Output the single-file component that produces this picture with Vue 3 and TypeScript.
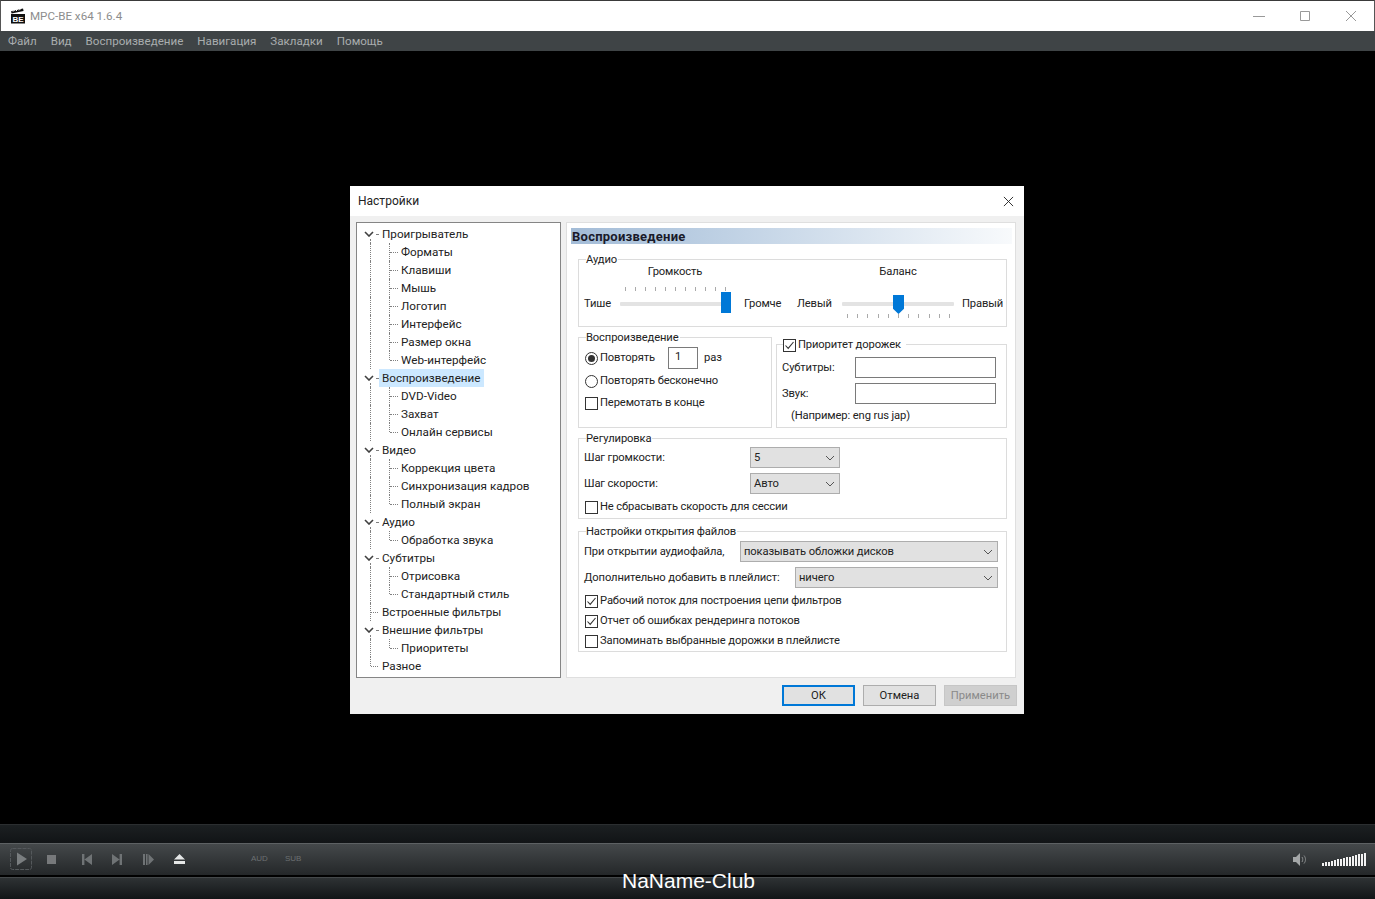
<script setup lang="ts">
type TreeRow = {
  label: string
  level: 0 | 1
  expander?: boolean
  lastChild?: boolean
  selected?: boolean
  lastRoot?: boolean
}

const menu = ['Файл', 'Вид', 'Воспроизведение', 'Навигация', 'Закладки', 'Помощь']

const tree: TreeRow[] = [
  { label: 'Проигрыватель', level: 0, expander: true },
  { label: 'Форматы', level: 1 },
  { label: 'Клавиши', level: 1 },
  { label: 'Мышь', level: 1 },
  { label: 'Логотип', level: 1 },
  { label: 'Интерфейс', level: 1 },
  { label: 'Размер окна', level: 1 },
  { label: 'Web-интерфейс', level: 1, lastChild: true },
  { label: 'Воспроизведение', level: 0, expander: true, selected: true },
  { label: 'DVD-Video', level: 1 },
  { label: 'Захват', level: 1 },
  { label: 'Онлайн сервисы', level: 1, lastChild: true },
  { label: 'Видео', level: 0, expander: true },
  { label: 'Коррекция цвета', level: 1 },
  { label: 'Синхронизация кадров', level: 1 },
  { label: 'Полный экран', level: 1, lastChild: true },
  { label: 'Аудио', level: 0, expander: true },
  { label: 'Обработка звука', level: 1, lastChild: true },
  { label: 'Субтитры', level: 0, expander: true },
  { label: 'Отрисовка', level: 1 },
  { label: 'Стандартный стиль', level: 1, lastChild: true },
  { label: 'Встроенные фильтры', level: 0 },
  { label: 'Внешние фильтры', level: 0, expander: true },
  { label: 'Приоритеты', level: 1, lastChild: true },
  { label: 'Разное', level: 0, lastRoot: true }
]

const ticks = Array.from({ length: 11 }, (_, i) => i)
const volumeBars = Array.from({ length: 15 }, (_, i) => ({
  x: i * 3,
  height: 3 + Math.round(i * 0.72)
}))
</script>

<template>
  <div class="player">
    <header class="titlebar">
      <svg class="titlebar__icon" viewBox="0 0 16 16" aria-hidden="true">
        <path d="M1 3.2 13 .6l.6 2.4L1.6 5.600Z" fill="#111" />
        <path d="M3 3.600 4.600 2M6 3 7.600 1.400M9 2.400l1.600-1.600" stroke="#fff" stroke-width="1" />
        <rect x="1" y="6" width="14" height="9.500" fill="#111" />
        <text x="8" y="14" text-anchor="middle" class="titlebar__icon-text">BE</text>
      </svg>
      <span class="titlebar__text">MPC-BE x64 1.6.4</span>
      <div class="titlebar__buttons">
        <svg viewBox="0 0 12 12" aria-hidden="true"><path d="M0 6.500h12" /></svg>
        <svg viewBox="0 0 12 12" aria-hidden="true"><path d="M1.500 1.500h9v9h-9Z" /></svg>
        <svg viewBox="0 0 12 12" aria-hidden="true"><path d="M1 1l10 10M11 1 1 11" /></svg>
      </div>
    </header>

    <nav class="menubar">
      <span v-for="item in menu" :key="item">{{ item }}</span>
    </nav>

    <main class="video">
      <section class="dialog" aria-label="Настройки">
        <div class="dialog__head">
          <span>Настройки</span>
          <svg viewBox="0 0 12 12" aria-hidden="true"><path d="M1 1l10 10M11 1 1 11" /></svg>
        </div>

        <div class="dialog__body">
          <div class="tree">
            <div v-for="row in tree" :key="row.label" class="tree__row">
              <i v-if="!row.lastRoot" class="tree__line tree__line--root" :class="{ 'tree__line--below': row.expander }" />
              <i v-else class="tree__line tree__line--root tree__line--half" />
              <template v-if="row.level === 1">
                <i class="tree__line tree__line--child" :class="{ 'tree__line--half': row.lastChild }" />
                <i class="tree__tick tree__tick--child" />
              </template>
              <i v-else class="tree__tick tree__tick--root" :class="{ 'tree__tick--short': row.expander }" />
              <svg v-if="row.expander" class="tree__chevron" viewBox="0 0 10 6" aria-hidden="true">
                <path d="M1 1l4 4 4-4" />
              </svg>
              <span
                class="tree__label"
                :class="{ 'tree__label--child': row.level === 1, 'tree__label--selected': row.selected }"
              >{{ row.label }}</span>
            </div>
          </div>

          <div class="panel">
            <h2 class="panel__title">Воспроизведение</h2>

            <div class="group group--audio">
              <span class="group__legend">Аудио</span>
              <div class="slider slider--volume">
                <span class="slider__caption">Громкость</span>
                <span>Тише</span>
                <div class="slider__rail">
                  <div class="slider__ticks slider__ticks--top"><i v-for="t in ticks" :key="t" /></div>
                  <div class="slider__thumb slider__thumb--end" />
                </div>
                <span>Громче</span>
              </div>
              <div class="slider slider--balance">
                <span class="slider__caption">Баланс</span>
                <span>Левый</span>
                <div class="slider__rail">
                  <div class="slider__ticks slider__ticks--bottom"><i v-for="t in ticks" :key="t" /></div>
                  <div class="slider__thumb slider__thumb--mid" />
                </div>
                <span>Правый</span>
              </div>
            </div>

            <div class="panel__pair">
              <div class="group group--repeat">
                <span class="group__legend">Воспроизведение</span>
                <div class="check-row check-row--tall">
                  <i class="radio radio--on" />
                  <span class="repeat-label">Повторять</span>
                  <span class="field field--count">1</span>
                  <span class="repeat-unit">раз</span>
                </div>
                <div class="check-row check-row--tall check-row--next">
                  <i class="radio" />
                  <span>Повторять бесконечно</span>
                </div>
                <div class="check-row check-row--tall">
                  <i class="check" />
                  <span>Перемотать в конце</span>
                </div>
              </div>

              <div class="group group--priority">
                <span class="group__legend group__legend--check">
                  <i class="check check--on">
                    <svg viewBox="0 0 13 13" aria-hidden="true"><path d="M2.500 6.500 5.200 9.400 10.500 3" /></svg>
                  </i>
                  Приоритет дорожек
                </span>
                <div class="priority-grid">
                  <span>Субтитры:</span>
                  <span class="field" />
                  <span>Звук:</span>
                  <span class="field" />
                </div>
                <p class="priority-note">(Например: eng rus jap)</p>
              </div>
            </div>

            <div class="group group--adjust">
              <span class="group__legend">Регулировка</span>
              <div class="combo-row">
                <span class="combo-row__label combo-row__label--adjust">Шаг громкости:</span>
                <div class="combo combo--small">
                  5
                  <svg viewBox="0 0 10 6" aria-hidden="true"><path d="M1 1l4 4 4-4" /></svg>
                </div>
              </div>
              <div class="combo-row">
                <span class="combo-row__label combo-row__label--adjust">Шаг скорости:</span>
                <div class="combo combo--small">
                  Авто
                  <svg viewBox="0 0 10 6" aria-hidden="true"><path d="M1 1l4 4 4-4" /></svg>
                </div>
              </div>
              <div class="check-row check-row--adjust">
                <i class="check" />
                <span>Не сбрасывать скорость для сессии</span>
              </div>
            </div>

            <div class="group group--files">
              <span class="group__legend">Настройки открытия файлов</span>
              <div class="combo-row">
                <span class="combo-row__label combo-row__label--audio">При открытии аудиофайла,</span>
                <div class="combo">
                  показывать обложки дисков
                  <svg viewBox="0 0 10 6" aria-hidden="true"><path d="M1 1l4 4 4-4" /></svg>
                </div>
              </div>
              <div class="combo-row">
                <span class="combo-row__label combo-row__label--playlist">Дополнительно добавить в плейлист:</span>
                <div class="combo">
                  ничего
                  <svg viewBox="0 0 10 6" aria-hidden="true"><path d="M1 1l4 4 4-4" /></svg>
                </div>
              </div>
              <div class="file-checks">
                <div class="check-row">
                  <i class="check check--on">
                    <svg viewBox="0 0 13 13" aria-hidden="true"><path d="M2.500 6.500 5.200 9.400 10.500 3" /></svg>
                  </i>
                  <span>Рабочий поток для построения цепи фильтров</span>
                </div>
                <div class="check-row">
                  <i class="check check--on">
                    <svg viewBox="0 0 13 13" aria-hidden="true"><path d="M2.500 6.500 5.200 9.400 10.500 3" /></svg>
                  </i>
                  <span>Отчет об ошибках рендеринга потоков</span>
                </div>
                <div class="check-row">
                  <i class="check" />
                  <span>Запоминать выбранные дорожки в плейлисте</span>
                </div>
              </div>
            </div>
          </div>
        </div>

        <footer class="dialog__foot">
          <button type="button" class="btn btn--primary">ОК</button>
          <button type="button" class="btn">Отмена</button>
          <button type="button" class="btn" disabled>Применить</button>
        </footer>
      </section>
    </main>

    <div class="seekbar" />

    <div class="controls">
      <svg class="ctl ctl--play" viewBox="0 0 22 22" aria-hidden="true">
        <rect x=".5" y=".5" width="21" height="21" rx="2" fill="none" stroke="#55595c" stroke-dasharray="4 1" />
        <path d="M7 4.500 17 11 7 17.500Z" fill="#7a7e80" />
      </svg>
      <svg class="ctl ctl--stop" viewBox="0 0 9 9" aria-hidden="true"><rect width="9" height="9" fill="#77797b" /></svg>
      <svg class="ctl ctl--prev" viewBox="0 0 10 11" aria-hidden="true"><path d="M0 0h2.400v11H0ZM10 0v11L2.400 5.500Z" fill="#6f7375" /></svg>
      <svg class="ctl ctl--next" viewBox="0 0 10 11" aria-hidden="true"><path d="M10 0H7.600v11H10ZM0 0v11l7.600-5.500Z" fill="#6f7375" /></svg>
      <svg class="ctl ctl--step" viewBox="0 0 11 11" aria-hidden="true"><path d="M0 0h2v11H0ZM3 0h1.600v11H3ZM5.500 0v11L11 5.500Z" fill="#6f7375" /></svg>
      <svg class="ctl ctl--eject" viewBox="0 0 11 10" aria-hidden="true"><path d="M5.500 0 11 5.500H0ZM0 7h11v3H0Z" fill="#e4e6e6" /></svg>
      <span class="ctl-text ctl-text--aud">AUD</span>
      <span class="ctl-text ctl-text--sub">SUB</span>
      <svg class="ctl ctl--speaker" viewBox="0 0 15 13" aria-hidden="true">
        <path d="M0 4h3l4-4v13L3 9H0Z" fill="#a4a7a8" />
        <path d="M9 4c1 1.500 1 3.500 0 5M11 2.500c2 2.500 2 5.500 0 8" fill="none" stroke="#8c8f90" />
      </svg>
      <svg class="ctl ctl--volume" viewBox="0 0 45 13" aria-hidden="true">
        <rect
          v-for="bar in volumeBars"
          :key="bar.x"
          :x="bar.x"
          :y="13 - bar.height"
          width="2"
          :height="bar.height"
          fill="#f2f2f2"
        />
      </svg>
    </div>

    <div class="statusbar" />
    <span class="watermark">NaName-Club</span>
  </div>
</template>

<style>
html,
body {
  margin: 0;
  background: #000;
}
</style>

<style scoped>
.player {
  position: relative;
  display: flex;
  flex-direction: column;
  width: 1375px;
  height: 899px;
  overflow: hidden;
  font-family: Roboto, 'Noto Sans', sans-serif;
  font-size: 12px;
  line-height: 16px;
  color: #222;
}

.titlebar {
  display: flex;
  align-items: center;
  flex: 0 0 31px;
  box-sizing: border-box;
  padding: 0 17px 0 10px;
  background: #fff;
  border-top: 1px solid #3a3a3a;
  border-left: 1px solid #555;
  border-right: 1px solid #555;
}

.titlebar__icon {
  width: 16px;
  height: 16px;
  margin-left: -1px;
}

.titlebar__icon-text {
  font-family: 'Liberation Sans', sans-serif;
  font-size: 8px;
  font-weight: 700;
  fill: #fff;
}

.titlebar__text {
  margin-left: 4px;
  font-size: 11.6px;
  color: #8d8d8d;
}

.titlebar__buttons {
  display: flex;
  gap: 34px;
  margin-left: auto;
}

.titlebar__buttons svg {
  width: 12px;
  height: 12px;
  fill: none;
  stroke: #999;
}

.menubar {
  display: flex;
  align-items: center;
  gap: 14px;
  flex: 0 0 20px;
  padding-left: 8px;
  font-size: 11.6px;
  background: #3f4446;
  color: #a9adae;
}

.video {
  position: relative;
  flex: 1;
  background: #000;
}

.dialog {
  position: absolute;
  top: 135px;
  left: 350px;
  display: flex;
  flex-direction: column;
  width: 674px;
  height: 528px;
  background: #f0f0f0;
}

.dialog__head {
  display: flex;
  align-items: center;
  justify-content: space-between;
  flex: 0 0 30px;
  padding: 0 10px 0 8px;
  background: #fff;
}

.dialog__head svg {
  width: 11px;
  height: 11px;
  fill: none;
  stroke: #222;
}

.dialog__body {
  display: flex;
  gap: 5px;
  flex: 0 0 456px;
  margin-top: 6px;
  padding: 0 8px 0 6px;
}

.tree {
  flex: 0 0 205px;
  box-sizing: border-box;
  padding-top: 2px;
  font-size: 11.7px;
  background: #fff;
  border: 1px solid #858585;
}

.tree__row {
  position: relative;
  display: flex;
  align-items: center;
  height: 18px;
}

.tree__line {
  position: absolute;
  top: 0;
  bottom: 0;
  border-left: 1px dotted #808080;
}

.tree__line--root {
  left: 13px;
}

.tree__line--child {
  left: 32px;
}

.tree__line--half {
  bottom: 9px;
}

.tree__line--below {
  top: 14px;
}

.tree__tick {
  position: absolute;
  top: 9px;
  border-top: 1px dotted #808080;
}

.tree__tick--root {
  left: 14px;
  width: 7px;
}

.tree__tick--short {
  left: 19px;
  width: 2px;
}

.tree__tick--child {
  left: 33px;
  width: 8px;
}

.tree__chevron {
  position: absolute;
  top: 6px;
  left: 7px;
  width: 10px;
  height: 6px;
  fill: none;
  stroke: #404040;
  stroke-width: 1.6;
}

.tree__label {
  margin-left: 22px;
  padding: 0 3px;
  height: 18px;
  line-height: 18px;
}

.tree__label--child {
  margin-left: 41px;
}

.tree__label--selected {
  background: #cce8ff;
}

.panel {
  display: flex;
  flex-direction: column;
  flex: 0 0 450px;
  box-sizing: border-box;
  padding: 5px 3px 0 4px;
  font-size: 11.2px;
  letter-spacing: -0.12px;
  background: #fff;
  border: 1px solid #dfdfdf;
}

.panel__title {
  height: 16px;
  margin: 0;
  padding-left: 1px;
  font-size: 13px;
  font-weight: 700;
  line-height: 17px;
  letter-spacing: 0.25px;
  color: #1a1a2a;
  background: linear-gradient(90deg, #a3bcd7 0%, #c3d4e6 40%, #f8fafc 100%);
}

.group {
  position: relative;
  box-sizing: border-box;
  margin-left: 7px;
  width: 429px;
  background: #fff;
  border: 1px solid #dcdcdc;
}

.group__legend {
  position: absolute;
  top: -8px;
  left: 7px;
  padding: 0 1px 0 0;
  background: #fff;
}

.group__legend--check {
  top: -8px;
  left: 6px;
  display: flex;
  align-items: center;
  gap: 2px;
  padding-right: 5px;
}

.group--audio {
  display: flex;
  gap: 17px;
  height: 68px;
  margin-top: 15px;
  padding: 4px 0 0 5px;
}

.slider {
  display: grid;
  grid-template-rows: 16px 24px;
  row-gap: 12px;
  align-items: center;
  white-space: nowrap;
}

.slider > span,
.slider > div {
  grid-row: 2;
}

.slider > .slider__caption {
  grid-row: 1;
  grid-column: 2;
  text-align: center;
}

.slider--volume {
  grid-template-columns: 36px 110px 50px;
  width: 196px;
}

.slider--volume > span:last-child {
  margin-left: 14px;
}

.slider--balance {
  grid-template-columns: 45px 112px auto;
  width: 205px;
}

.slider--balance > span:last-child {
  margin-left: 8px;
}

.slider__rail {
  position: relative;
  height: 4px;
  background: #e3e3e3;
  border-radius: 1px;
}

.slider__ticks {
  position: absolute;
  right: 4px;
  left: 5px;
  display: flex;
  justify-content: space-between;
}

.slider__ticks i {
  width: 1px;
  height: 4px;
  background: #aaa;
}

.slider__ticks--top {
  top: -15px;
}

.slider__ticks--bottom {
  top: 12px;
}

.slider__thumb {
  position: absolute;
  background: #0078d7;
}

.slider__thumb--end {
  top: -10px;
  right: -1px;
  width: 10px;
  height: 21px;
}

.slider__thumb--mid {
  top: -7px;
  left: 51px;
  width: 11px;
  height: 19px;
  clip-path: polygon(0 0, 100% 0, 100% 72%, 50% 100%, 0 72%);
}

.panel__pair {
  display: flex;
  align-items: flex-end;
  gap: 4px;
  margin: 10px 0 0 7px;
}

.panel__pair .group {
  margin-left: 0;
}

.group--repeat {
  width: 194px;
  height: 91px;
  padding: 9px 0 0 6px;
}

.group--priority {
  width: 231px;
  height: 84px;
  padding: 12px 0 0 5px;
}

.check-row {
  display: flex;
  align-items: center;
  gap: 2px;
  height: 20px;
  white-space: nowrap;
}

.check-row--tall {
  height: 22px;
}

.check-row--next {
  margin-top: 1px;
}

.check-row--adjust {
  height: 16px;
  margin: 5px 0 0 1px;
}

.radio,
.check {
  display: block;
  flex: none;
  box-sizing: border-box;
  width: 13px;
  height: 13px;
  background: #fff;
  border: 1px solid #333;
}

.radio {
  position: relative;
  border-radius: 50%;
}

.radio--on::after {
  content: '';
  position: absolute;
  top: 2px;
  left: 2px;
  width: 7px;
  height: 7px;
  border-radius: 50%;
  background: #333;
}

.check svg {
  display: block;
  width: 13px;
  height: 13px;
  margin: -1px;
  fill: none;
  stroke: #333;
  stroke-width: 1.1;
}

.repeat-label {
  width: 66px;
}

.repeat-unit {
  margin-left: 4px;
}

.field {
  display: block;
  box-sizing: border-box;
  height: 21px;
  background: #fff;
  border: 1px solid #7a7a7a;
}

.field--count {
  width: 30px;
  height: 22px;
  padding: 1px 0 0 6px;
}

.priority-grid {
  display: grid;
  grid-template-columns: 73px 141px;
  row-gap: 5px;
  align-items: center;
}

.priority-note {
  margin: 4px 0 0 9px;
}

.group--adjust {
  height: 81px;
  margin-top: 10px;
  padding: 8px 0 0 5px;
}

.group--files {
  height: 121px;
  margin-top: 12px;
  padding: 9px 8px 0 5px;
}

.combo-row {
  display: flex;
  align-items: center;
  height: 21px;
  margin-bottom: 5px;
  white-space: nowrap;
}

.combo-row__label--adjust {
  flex: 0 0 166px;
}

.combo-row__label--audio {
  flex: 0 0 156px;
}

.combo-row__label--playlist {
  flex: 0 0 211px;
}

.combo {
  display: flex;
  align-items: center;
  justify-content: space-between;
  flex: 1;
  box-sizing: border-box;
  height: 21px;
  padding: 0 4px 0 3px;
  background: #e1e1e1;
  border: 1px solid #adadad;
}

.combo--small {
  flex: 0 0 90px;
}

.combo svg {
  width: 10px;
  height: 6px;
  fill: none;
  stroke: #555;
}

.file-checks {
  margin: -2px 0 0 1px;
}

.dialog__foot {
  display: flex;
  justify-content: flex-end;
  gap: 8px;
  padding: 7px 7px 0 0;
}

.btn {
  box-sizing: border-box;
  width: 73px;
  height: 21px;
  padding: 0;
  font-family: inherit;
  font-size: 11.2px;
  color: #222;
  background: #e1e1e1;
  border: 1px solid #adadad;
}

.btn--primary {
  border: 2px solid #0078d7;
}

.btn:disabled {
  color: #8a8a8a;
  background: #cfcfcf;
  border-color: #c6c6c6;
}

.seekbar {
  flex: 0 0 19px;
  box-sizing: border-box;
  background: linear-gradient(#1c2022, #111416);
  border-top: 1px solid #2b2e30;
}

.controls {
  position: relative;
  display: flex;
  align-items: center;
  flex: 0 0 32px;
  box-sizing: border-box;
  padding: 0 0 1px 10px;
  background: linear-gradient(#44484a, #242729);
  border-top: 1px solid #5d6163;
}

.ctl {
  display: block;
  flex: none;
}

.ctl--play {
  width: 22px;
  height: 22px;
}

.ctl--stop {
  width: 9px;
  height: 9px;
  margin-left: 15px;
}

.ctl--prev {
  width: 10px;
  height: 11px;
  margin-left: 26px;
}

.ctl--next {
  width: 10px;
  height: 11px;
  margin-left: 20px;
}

.ctl--step {
  width: 11px;
  height: 11px;
  margin-left: 21px;
}

.ctl--eject {
  width: 11px;
  height: 10px;
  margin-left: 20px;
}

.ctl-text {
  font-family: 'Liberation Sans', sans-serif;
  font-size: 8px;
  color: #6c7072;
}

.ctl-text--aud {
  margin-left: 66px;
}

.ctl-text--sub {
  margin-left: 17px;
}

.ctl--speaker {
  width: 15px;
  height: 13px;
  margin-left: auto;
}

.ctl--volume {
  width: 45px;
  height: 13px;
  margin: 0 8px 0 14px;
}

.statusbar {
  flex: 0 0 22px;
  box-sizing: border-box;
  margin-top: 2px;
  background: linear-gradient(#2e3234, #121517);
  border-top: 1px solid #44484a;
}

.watermark {
  position: absolute;
  bottom: 7px;
  left: 622px;
  font-family: 'Liberation Sans', sans-serif;
  font-size: 21px;
  line-height: 22px;
  color: #fff;
}
</style>
